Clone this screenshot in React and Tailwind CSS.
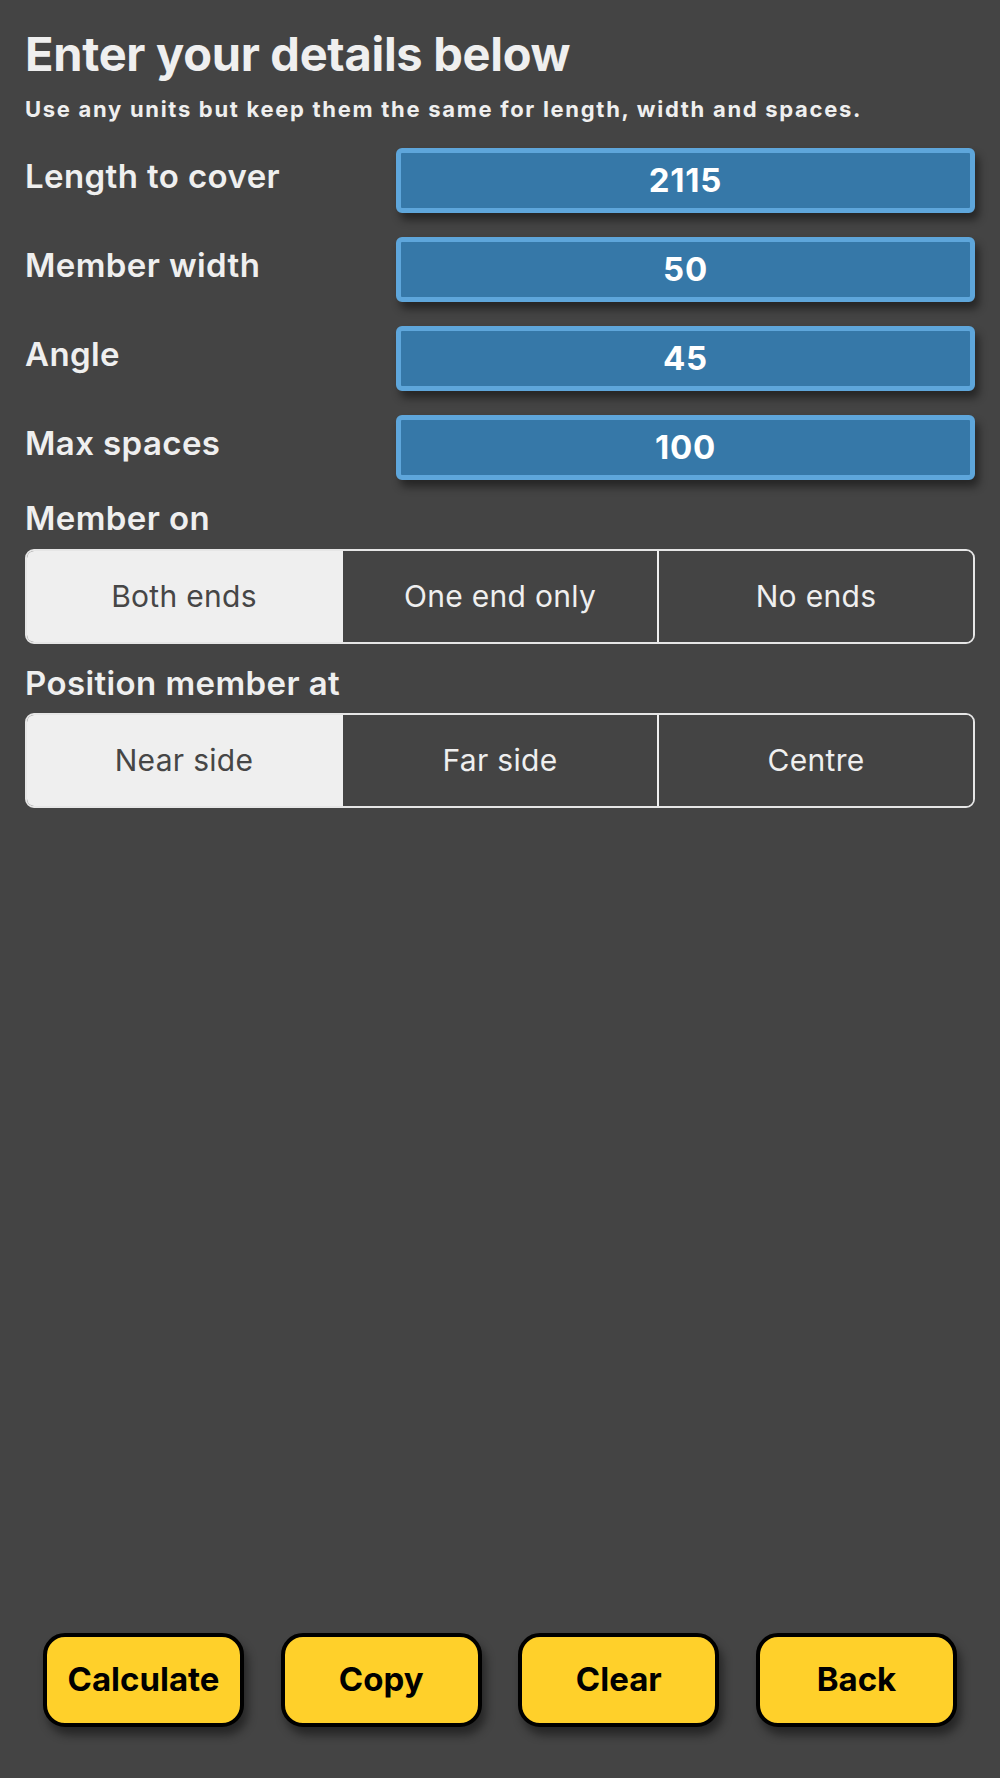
import React, { useState } from 'react';

const fields = [
  { label: 'Length to cover', value: '2115' },
  { label: 'Member width', value: '50' },
  { label: 'Angle', value: '45' },
  { label: 'Max spaces', value: '100' },
];

const Segmented = ({ options, selected, onSelect }) => (
  <div className="flex h-[95px] rounded-[9px] border-2 border-[#e6e6e6] overflow-hidden">
    {options.map((opt, i) => (
      <button
        key={opt}
        onClick={() => onSelect(i)}
        className={
          'flex-1 flex items-center justify-center text-[30px] tracking-[0.3px] ' +
          (i === selected ? 'bg-[#efefef] text-[#464646]' : 'bg-[#444444] text-[#efefef]') +
          (i > 0 ? ' border-l-2 border-[#efefef]' : '')
        }
      >
        {opt}
      </button>
    ))}
  </div>
);

export default function App() {
  const [memberOn, setMemberOn] = useState(0);
  const [position, setPosition] = useState(0);

  return (
    <div className="h-[1778px] bg-[#444444] flex flex-col px-[25px] font-[Inter,sans-serif] text-[#efefef]">
      {/* en-tête */}
      <h1 className="mt-[26px] text-[47px] leading-[56px] font-bold tracking-[-0.3px]">Enter your details below</h1>
      <p className="mt-[13px] text-[22px] leading-[28px] font-bold tracking-[1.7px]">
        Use any units but keep them the same for length, width and spaces.
      </p>

      {/* champs */}
      <div className="mt-[25px] flex flex-col gap-[24px]">
        {fields.map((f) => (
          <div key={f.label} className="flex items-start">
            <div className="w-[371px] pt-[8px] text-[33px] leading-[40px] font-semibold tracking-[0.4px]">{f.label}</div>
            <div className="flex-1 h-[65px] rounded-[6px] border-[5px] border-[#5ea6db] bg-[#3678a8] flex items-center justify-center text-[33px] font-bold tracking-[0.8px] text-white shadow-[4px_7px_9px_rgba(0,0,0,0.45)]">
              {f.value}
            </div>
          </div>
        ))}
      </div>

      <div className="mt-[18px] text-[33px] leading-[40px] font-semibold tracking-[0.4px]">Member on</div>
      <div className="mt-[11px]">
        <Segmented options={['Both ends', 'One end only', 'No ends']} selected={memberOn} onSelect={setMemberOn} />
      </div>

      <div className="mt-[19px] text-[33px] leading-[40px] font-semibold tracking-[0.4px]">Position member at</div>
      <div className="mt-[10px]">
        <Segmented options={['Near side', 'Far side', 'Centre']} selected={position} onSelect={setPosition} />
      </div>

      {/* boutons */}
      <div className="mt-auto mb-[51px] flex justify-between px-[18px]">
        {['Calculate', 'Copy', 'Clear', 'Back'].map((b) => (
          <button
            key={b}
            className="w-[201px] h-[94px] rounded-[22px] border-4 border-black bg-[#ffd02a] text-black text-[33px] font-bold shadow-[4px_8px_10px_rgba(0,0,0,0.45)]"
          >
            {b}
          </button>
        ))}
      </div>
    </div>
  );
}
